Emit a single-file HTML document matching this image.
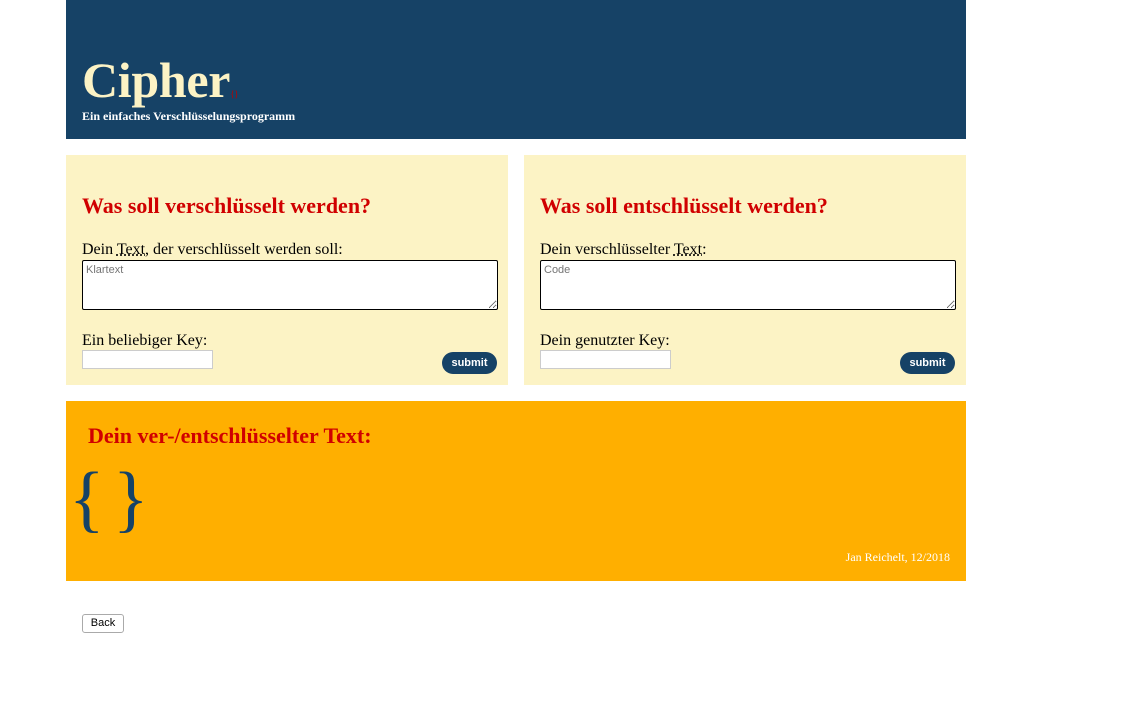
<!DOCTYPE html>
<html><head><meta charset="utf-8"><style>
body{margin:0;background:#fff;font-family:"Liberation Serif",serif;}
.hdr{position:absolute;left:66px;top:0;width:900px;height:139px;background:#164266;}
.hdr h1{position:absolute;left:16px;top:52px;margin:0;font-size:50px;font-weight:bold;color:#fcf3c5;line-height:56px;letter-spacing:-0.3px;}
.hdr h1 small{font-size:9px;color:#b00;font-weight:normal;}
.hdr p{position:absolute;left:16px;top:109px;margin:0;font-size:12px;font-weight:bold;color:#fff;}
.box{position:absolute;top:155px;width:442px;height:230px;background:#fcf3c5;}
h2{font-size:22px;color:#d00000;font-weight:bold;}
.lbl{position:absolute;left:16px;font-size:16px;color:#000;}
textarea{position:absolute;left:16px;top:105px;width:416px;height:50px;box-sizing:border-box;border:1px solid #000;border-radius:2px;font-family:"Liberation Sans",sans-serif;font-size:11px;padding:3px;resize:both;}
input{position:absolute;left:16px;top:195px;width:131px;height:19px;box-sizing:border-box;border:1px solid #ccc;}
.btn{position:absolute;left:376px;top:197px;width:55px;height:22px;border-radius:11px;background:#164266;color:#fff;font-family:"Liberation Sans",sans-serif;font-size:11px;font-weight:bold;text-align:center;line-height:22px;}
abbr{text-decoration:underline dotted;}
.out{position:absolute;left:66px;top:401px;width:900px;height:180px;background:#ffaf00;}
</style></head><body>
<div class="hdr"><h1>Cipher<small>{}</small></h1><p>Ein einfaches Verschlüsselungsprogramm</p></div>
<div class="box" style="left:66px">
<h2 style="position:absolute;left:16px;top:38px;margin:0">Was soll verschlüsselt werden?</h2>
<div class="lbl" style="top:86px">Dein <abbr>Text</abbr>, der verschlüsselt werden soll:</div>
<textarea placeholder="Klartext"></textarea>
<div class="lbl" style="top:177px">Ein beliebiger Key:</div>
<input><div class="btn">submit</div></div>
<div class="box" style="left:524px">
<h2 style="position:absolute;left:16px;top:38px;margin:0">Was soll entschlüsselt werden?</h2>
<div class="lbl" style="top:86px">Dein verschlüsselter <abbr>Text</abbr>:</div>
<textarea placeholder="Code"></textarea>
<div class="lbl" style="top:177px">Dein genutzter Key:</div>
<input><div class="btn">submit</div></div>
<div class="out">
<h2 style="position:absolute;left:22px;top:22px;margin:0">Dein ver-/entschlüsselter Text:</h2>
<div style="position:absolute;left:3px;top:56px;font-size:74px;color:#164266;line-height:84px;letter-spacing:-5px">{ }</div>
<div style="position:absolute;right:16px;top:149px;font-size:12px;color:#fff">Jan Reichelt, 12/2018</div>
</div>
<div style="position:absolute;left:82px;top:614px;width:40px;height:17px;border:1px solid #aaa;border-radius:3px;font-family:'Liberation Sans',sans-serif;font-size:11px;text-align:center;line-height:17px;background:#fff">Back</div>
</body></html>
